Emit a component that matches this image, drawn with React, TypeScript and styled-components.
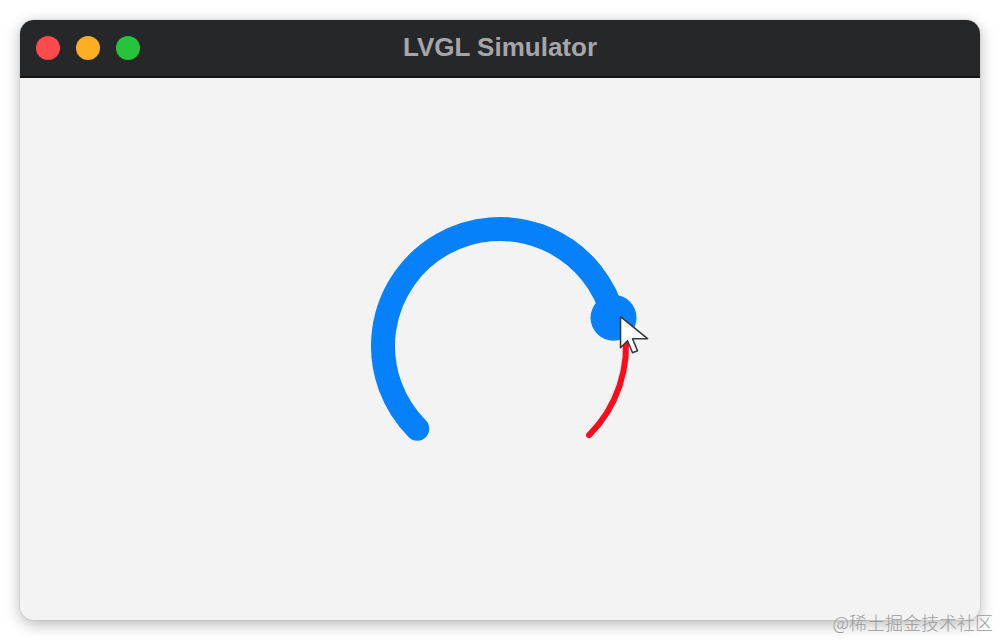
import React from "react";
import styled, { createGlobalStyle } from "styled-components";

const Global = createGlobalStyle`
  html, body { margin: 0; padding: 0; background: #ffffff; }
  body { width: 1000px; height: 640px; overflow: hidden; font-family: "Liberation Sans", Arial, sans-serif; }
`;

const Page = styled.div`
  position: relative;
  width: 1000px;
  height: 640px;
  padding: 20px;
  box-sizing: border-box;
`;

const Window = styled.div`
  width: 960px;
  height: 600px;
  border-radius: 14px;
  overflow: hidden;
  display: flex;
  flex-direction: column;
  background: #f3f3f3;
  box-shadow: 0 4px 16px rgba(0, 0, 0, 0.28), 0 0 2px rgba(0, 0, 0, 0.2);
`;

const TitleBar = styled.div`
  position: relative;
  height: 56px;
  flex: none;
  background: #262729;
  border-bottom: 2px solid #141414;
  display: flex;
  align-items: center;
  justify-content: center;
`;

const Lights = styled.div`
  position: absolute;
  left: 16px;
  top: 16px;
  display: flex;
  gap: 16px;
`;

const Light = styled.span<{ $c: string }>`
  width: 24px;
  height: 24px;
  border-radius: 50%;
  background: ${(p) => p.$c};
`;

const Title = styled.div`
  font-family: "Liberation Sans", Arial, sans-serif;
  font-weight: 700;
  font-size: 26px;
  line-height: 30px;
  color: #a6a6a8;
  margin-top: -2px;
`;

const Content = styled.div`
  flex: 1;
  display: flex;
  align-items: center;
  justify-content: center;
  padding-bottom: 6px;
`;

const Watermark = styled.div`
  position: absolute;
  right: 7px;
  bottom: 5px;
  font-family: "Noto Sans CJK SC", "Liberation Sans", sans-serif;
  font-size: 18px;
  color: #9c9c9c;
  font-weight: 300;
`;

const CX = 150;
const CY = 150;
const pt = (r: number, deg: number) => {
  const a = (deg * Math.PI) / 180;
  return [CX + r * Math.cos(a), CY + r * Math.sin(a)];
};

const ArcWidget: React.FC = () => {
  const r = 117;
  const [sx, sy] = pt(r, 135);
  const [ex, ey] = pt(r, 346);
  const rr = 126;
  const [rsx, rsy] = pt(rr, 352);
  const [rex, rey] = pt(rr, 45);
  return (
    <svg width="300" height="300" viewBox="0 0 300 300">
      <path
        d={`M ${rsx} ${rsy} A ${rr} ${rr} 0 0 1 ${rex} ${rey}`}
        fill="none"
        stroke="#ff0a1a"
        strokeWidth="6"
        strokeLinecap="round"
      />
      <path
        d={`M ${sx} ${sy} A ${r} ${r} 0 1 1 ${ex} ${ey}`}
        fill="none"
        stroke="#0781fa"
        strokeWidth="24"
        strokeLinecap="round"
      />
      <circle cx={ex} cy={ey} r="23" fill="#0781fa" />
      <g transform={`translate(${ex + 7} ${ey - 1})`}>
        <polygon
          points="0,0 0,31 7,24 12,36 17,34 12,22 27,22"
          fill="#ffffff"
          stroke="#3a3a3a"
          strokeWidth="1.6"
          strokeLinejoin="round"
        />
      </g>
    </svg>
  );
};

export default function App() {
  return (
    <>
      <Global />
      <Page>
        <Window>
          <TitleBar>
            <Lights>
              <Light $c="#fe4a4a" />
              <Light $c="#fdae23" />
              <Light $c="#27c43a" />
            </Lights>
            <Title>LVGL Simulator</Title>
          </TitleBar>
          <Content>
            <ArcWidget />
          </Content>
        </Window>
        <Watermark>@稀土掘金技术社区</Watermark>
      </Page>
    </>
  );
}
